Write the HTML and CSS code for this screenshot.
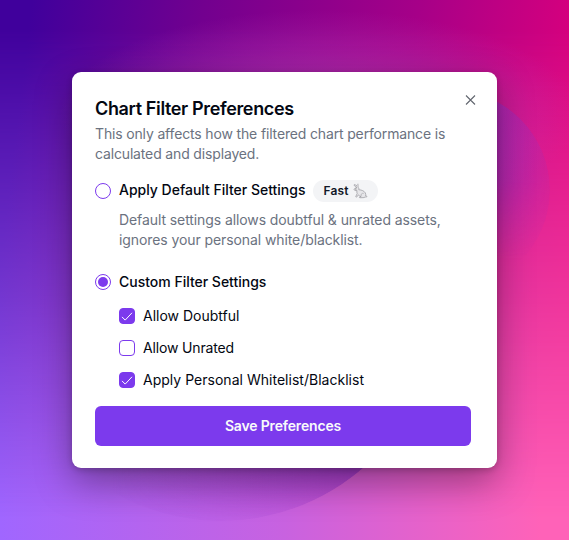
FILE: index.html
```html
<!DOCTYPE html>
<html lang="en">
<head>
    <meta charset="UTF-8">
    <meta name="viewport" content="width=device-width, initial-scale=1.0">
    <title>Chart Filter Preferences</title>
    <link rel="stylesheet" href="styles.css">
</head>
<body>
    <div class="backdrop">
        <div class="backdrop-bottom"></div>
        <div class="backdrop-glow"></div>
        <div class="backdrop-disc"></div>
        <div class="backdrop-disc small"></div>
    </div>
    <form class="dialog">
        <button type="button" class="close" aria-label="Close">
            <svg width="15" height="15" viewBox="0 0 15 15" fill="none" stroke="currentColor" stroke-width="1.1">
                <path d="M3 3.500l9 9M12 3.500l-9 9"/>
            </svg>
        </button>
        <div class="header">
            <h2>Chart Filter Preferences</h2>
            <p class="intro">This only affects how the filtered chart performance is<br>calculated and displayed.</p>
        </div>

        <div class="option">
            <span class="radio"></span>
            <label class="option-title">Apply Default Filter Settings</label>
            <span class="badge">Fast
                <svg width="16" height="16" viewBox="0 0 16 16">
                    <path d="M5 4.700C3.900 3.700 2.700 3 2.100 2.400c-.5-.5 0-1 .8-.7C4.300 2.200 5.500 3 6 4.300c.8.5 1.100 1.400.8 2.400 2.900.2 5.500 1.300 6.500 3.200.5 1 .6 2 .2 2.700.9 0 1.600.5 1.300 1.100-.2.500-.9.500-1.600.3-.6.600-1.700.7-3.200.7H8c-.8 0-.8-.7.100-.9l1-.2c-1.200-.3-2.100-.9-2.700-1.700l-1.200 1.700c-.5.700-1.800.5-1.400-.2l1.400-2.800c-.4-.9-.5-1.900-.2-3-1.400.1-2.700-.2-2.900-.9C1.900 5.900 3.200 4.700 5 4.700z" fill="#e6e6e9" stroke="#96969c" stroke-width=".7"/>
                    <path d="M5.300 4.200C5 2.600 5.300 1.400 5.900.8c.6.900.7 2.200.3 3.600" fill="#f4f4f5" stroke="#ababb0" stroke-width=".6"/>
                    <path d="M9.200 13.200c-.7-1.900.8-3.400 2.500-2.800" fill="none" stroke="#a8a8ad" stroke-width=".7"/>
                    <circle cx="3.900" cy="5.900" r=".5" fill="#555"/>
                </svg>
            </span>
        </div>
        <p class="hint">Default settings allows doubtful &amp; unrated assets,<br>ignores your personal white/blacklist.</p>

        <div class="option custom">
            <span class="radio checked"></span>
            <label class="option-title">Custom Filter Settings</label>
        </div>
        <div class="checks">
            <div class="check-row">
                <span class="checkbox checked">
                    <svg width="16" height="16" viewBox="0 0 16 16"><path d="M3 8.900l3.200 3.200 6.800-7.300"/></svg>
                </span>
                <label>Allow Doubtful</label>
            </div>
            <div class="check-row">
                <span class="checkbox"></span>
                <label class="label-unrated">Allow Unrated</label>
            </div>
            <div class="check-row">
                <span class="checkbox checked">
                    <svg width="16" height="16" viewBox="0 0 16 16"><path d="M3 8.900l3.200 3.200 6.800-7.300"/></svg>
                </span>
                <label class="label-personal">Apply Personal Whitelist/Blacklist</label>
            </div>
        </div>
        <button type="button" class="save">Save Preferences</button>
    </form>
</body>
</html>
```
FILE: styles.css
```css
* {
    box-sizing: border-box;
}
body {
    display: flex;
    justify-content: center;
    align-items: center;
    height: 540px;
    margin: 0;
    overflow: hidden;
    font-family: Inter, sans-serif;
    font-size: 14px;
    line-height: 20px;
    color: #030712;
}

/* background */
.backdrop {
    position: absolute;
    inset: 0;
    overflow: hidden;
    background: linear-gradient(97deg, #40009c 5%, #72008f 32%, #a60088 66%, #de007c 95%);
}
.backdrop-bottom {
    position: absolute;
    inset: 0;
    background: linear-gradient(90deg, #a066ff, #c862e0 50%, #ff62b8 95%);
    -webkit-mask-image: linear-gradient(#0000 5%, #0008 55%, #000 96%);
    mask-image: linear-gradient(#0000 5%, #0008 55%, #000 96%);
}
.backdrop-glow {
    position: absolute;
    inset: 0;
    background: radial-gradient(ellipse 260px 105px at 320px 115px, #c050c890, #b840b860 50%, #b030b000);
}
.backdrop-disc {
    position: absolute;
    left: 4px;
    top: 87px;
    width: 434px;
    height: 434px;
    border-radius: 50%;
    background: linear-gradient(90deg, #7a20c000 25%, #7a20c0a0 80%);
    -webkit-mask-image: linear-gradient(#0000 30%, #000 86%, #0002);
    mask-image: linear-gradient(#0000 30%, #000 86%, #0002);
}
.backdrop-disc.small {
    left: 350px;
    top: 90px;
    width: 200px;
    height: 200px;
    background: linear-gradient(90deg, #8c30c890 68%, #a030b828);
    -webkit-mask-image: linear-gradient(#000 45%, #0000 85%);
    mask-image: linear-gradient(#000 45%, #0000 85%);
}

/* dialog */
.dialog {
    position: relative;
    display: flex;
    flex-direction: column;
    width: 425px;
    height: 396px;
    padding: 26px 26px 22px 23px;
    background: #fff;
    border-radius: 9px;
    box-shadow: 0 14px 36px rgba(0, 0, 0, 0.35), 0 2px 6px rgba(0, 0, 0, 0.2);
}
.close {
    position: absolute;
    top: 20px;
    right: 19px;
    width: 15px;
    height: 15px;
    padding: 0;
    border: none;
    background: none;
    color: #62666f;
}
.close svg {
    display: block;
}
h2 {
    margin: 0;
    font-size: 18px;
    line-height: 22px;
    font-weight: 600;
    letter-spacing: -0.36px;
}
p {
    margin: 0;
    color: #6b7280;
    white-space: nowrap;
}
.intro {
    margin-top: 4px;
    letter-spacing: -0.155px;
}
.option {
    display: flex;
    align-items: center;
    height: 22px;
    margin-top: 16px;
}
.option-title {
    margin-left: 8px;
    padding-bottom: 2px;
    font-weight: 500;
    letter-spacing: -0.01px;
    white-space: nowrap;
}
.radio {
    width: 16px;
    height: 16px;
    border: 1px solid #7c3aed;
    border-radius: 50%;
}
.radio.checked {
    padding: 2px;
    background: #7c3aed content-box;
}
.badge {
    display: flex;
    align-items: center;
    gap: 3px;
    width: 65px;
    height: 22px;
    margin-left: 8px;
    padding-left: 10px;
    border-radius: 11px;
    background: #f3f4f6;
    color: #111827;
    font-size: 12px;
    font-weight: 600;
    letter-spacing: 0.2px;
}
.hint {
    margin: 8px 0 0 24px;
    letter-spacing: -0.09px;
}
.custom {
    margin-top: 21px;
}
.custom .option-title {
    padding-bottom: 0;
}
.checks {
    display: flex;
    flex-direction: column;
    gap: 12px;
    margin: 14px 0 16px 24px;
}
.check-row {
    display: flex;
    align-items: center;
    gap: 8px;
    height: 20px;
    white-space: nowrap;
}
.label-unrated {
    letter-spacing: -0.15px;
}
.label-personal {
    letter-spacing: 0.02px;
}
.checkbox {
    width: 16px;
    height: 16px;
    border: 1px solid #7c3aed;
    border-radius: 4px;
}
.checkbox.checked {
    background: #7c3aed;
}
.checkbox svg {
    display: block;
    margin: -1px;
    fill: none;
    stroke: #fff;
}
.save {
    height: 40px;
    flex-shrink: 0;
    padding: 0 0 2px;
    border: none;
    border-radius: 6px;
    background: #7c3aed;
    color: #f9fafb;
    font: 600 14px Inter, sans-serif;
    letter-spacing: -0.17px;
}
```
